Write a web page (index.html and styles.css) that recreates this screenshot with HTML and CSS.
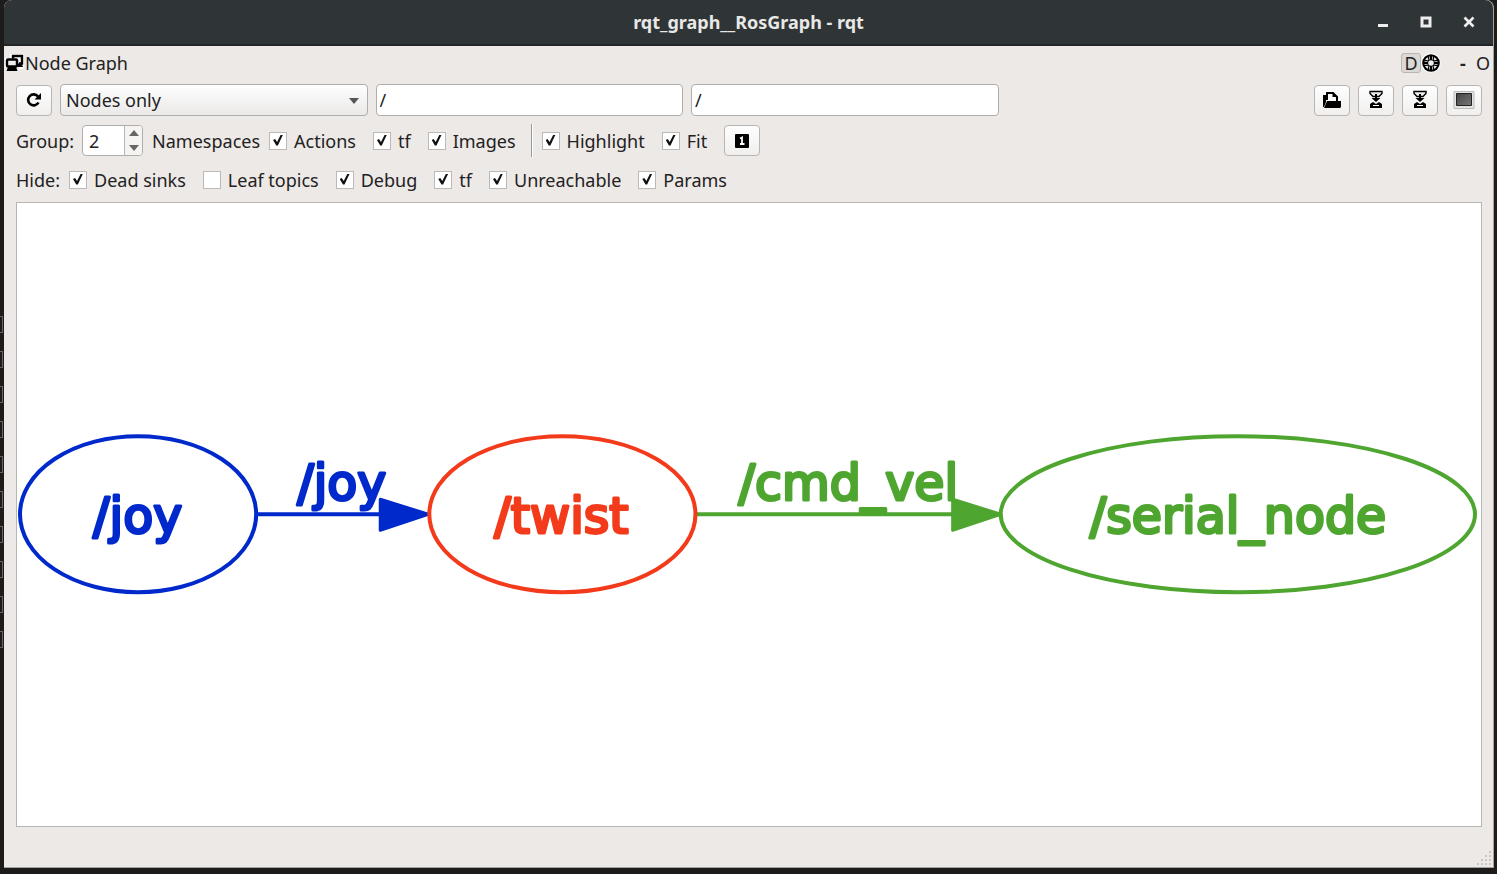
FILE: index.html
```html
<!DOCTYPE html>
<html lang="en">
<head>
<meta charset="utf-8">
<title>rqt_graph__RosGraph - rqt</title>
<link rel="stylesheet" href="styles.css">
</head>
<body>
<div class="desktop">
<div class="gutter" aria-hidden="true"><i></i><i></i><i></i><i></i><i></i><i></i><i></i><i></i><i></i><i></i></div>
<main class="window">
  <header class="titlebar">
    <h1 class="title">rqt_graph__RosGraph - rqt</h1>
    <div class="window-buttons">
      <button class="wm" aria-label="Minimize"><svg width="12" height="12" viewBox="0 0 12 12"><path d="M1 8h10v3H1z" fill="#eee"/></svg></button>
      <button class="wm" aria-label="Maximize"><svg width="12" height="12" viewBox="0 0 12 12"><path d="M2 2h8v8H2z" fill="none" stroke="#eee" stroke-width="3"/></svg></button>
      <button class="wm" aria-label="Close"><svg width="12" height="12" viewBox="0 0 12 12"><path d="M1.500 1.500l9 9M10.500 1.500l-9 9" stroke="#eee" stroke-width="2.600"/></svg></button>
    </div>
  </header>
  <div class="dock-title">
    <svg class="dock-icon" width="19" height="18" viewBox="0 0 19 18"><path d="M7.500 5V2.200h9v8H14M14 12.500h4" fill="none" stroke="#fff" stroke-width="5"/><path d="M2 6h9v6H2z" fill="#fff" stroke="#fff" stroke-width="4"/><path d="M8 4.500V2h9v7.500h-3" fill="none" stroke="#000" stroke-width="2.400"/><path d="M13 13h5l-1.500-3.500H13z"/><rect x="2" y="5.500" width="10" height="7" rx="1" fill="#eee" stroke="#000" stroke-width="2.400"/><path d="M3 13h8l1.500 4h-11z"/></svg>
    <span class="dock-name">Node Graph</span>
    <button class="dock-button raised">D</button>
    <button class="dock-button" aria-label="Help"><svg width="20" height="20" viewBox="0 0 20 20"><circle cx="10" cy="10" r="9.800" fill="#fff"/><circle cx="10" cy="10" r="8.800"/><circle cx="10" cy="10" r="5.600" fill="none" stroke="#eee" stroke-width="2"/><path d="M7 2h6v4H7zM7 14h6v4H7zM2 7h4v6H2zM14 7h4v6h-4z"/><path d="M8.500 3.500v3M11.500 3.500v3M8.500 13.500v3M11.500 13.500v3M3.500 8.500h3M3.500 11.500h3M13.500 8.500h3M13.500 11.500h3" stroke="#ddd" stroke-width=".8"/><circle cx="10" cy="10" r="2.800" fill="#eee"/></svg></button>
    <button class="dock-button minus">-</button>
    <button class="dock-button">O</button>
  </div>
  <div class="row tools">
    <button class="tool" aria-label="Refresh"><svg width="18" height="18" viewBox="0 0 18 18"><path d="M13.500 11.500A5.500 5.500 0 1 1 13 5.500" fill="none" stroke="#000" stroke-width="2.600"/><path d="M16 2v6.500H9.500z"/></svg></button>
    <div class="fields">
      <div class="combo"><select aria-label="Graph type"><option>Nodes only</option></select><svg class="arrow" width="10" height="6" viewBox="0 0 10 6"><path d="M0 0h10L5 6z" fill="#555"/></svg></div>
      <input class="line" type="text" value="/" aria-label="Namespace filter">
      <input class="line" type="text" value="/" aria-label="Topic filter">
    </div>
    <div class="tool-group">
      <button class="tool" aria-label="Load"><svg width="20" height="20" viewBox="0 0 20 20"><path d="M1 5h3v7L2 17H1z"/><path d="M5 10V3h6l4 4v4" fill="#fff" stroke="#000" stroke-width="2"/><path d="M10.500 2v5h5z"/><path d="M5 11h14v6l-1 1H2z"/></svg></button>
      <button class="tool" aria-label="Save DOT"><svg width="18" height="20" viewBox="0 0 18 20"><path d="M3 1.500h12v2l-3 3h-6l-3-3z" fill="#eee" stroke="#000" stroke-width="1.400"/><path d="M8 4h2v4h3.500L9 12 4.500 8H8z"/><path d="M3 18v-4l3-2 3 2 3-2 3 2v4z"/><path d="M6 15.500h6" stroke="#fff"/></svg></button>
      <button class="tool" aria-label="Save SVG"><svg width="18" height="20" viewBox="0 0 18 20"><path d="M3 1.500h12v2l-3 3h-6l-3-3z" fill="#eee" stroke="#000" stroke-width="1.400"/><path d="M8 4h2v4h3.500L9 12 4.500 8H8z"/><path d="M3 18v-4l3-2 3 2 3-2 3 2v4z"/><path d="M6 15.500h6" stroke="#fff"/></svg></button>
      <button class="tool" aria-label="Save image"><svg width="22" height="18" viewBox="0 0 22 18"><defs><linearGradient id="screen" x1="0" y1="0" x2="1" y2="1"><stop offset="0" stop-color="#444"/><stop offset="1" stop-color="#777"/></linearGradient></defs><path d="M1 .5h20v17H1z" fill="#e4e4e2" stroke="#bbb"/><path d="M3.500 2.500h15v12h-15z" fill="url(#screen)" stroke="#222"/></svg></button>
    </div>
  </div>
  <div class="row options">
    <label for="depth">Group:</label>
    <div class="spin"><input id="depth" type="number" value="2"><div class="steps"><button aria-label="Increase"><svg width="10" height="6" viewBox="0 0 10 6"><path d="M0 6h10L5 0z" fill="#666"/></svg></button><button aria-label="Decrease"><svg width="10" height="6" viewBox="0 0 10 6"><path d="M0 0h10L5 6z" fill="#666"/></svg></button></div></div>
    <span class="namespaces">Namespaces</span>
    <div class="checks">
      <label class="check"><input type="checkbox" checked>Actions</label>
      <label class="check"><input type="checkbox" checked>tf</label>
      <label class="check"><input type="checkbox" checked>Images</label>
    </div>
    <span class="separator"></span>
    <div class="checks">
      <label class="check"><input type="checkbox" checked>Highlight</label>
      <label class="check"><input type="checkbox" checked>Fit</label>
      <button class="tool" aria-label="Fit in view"><svg width="14" height="14" viewBox="0 0 14 14"><rect width="14" height="14" rx="1"/><path d="M5 4.500l2-1v6M5 10h4.500" fill="none" stroke="#fff" stroke-width="1.800"/></svg></button>
    </div>
  </div>
  <div class="row hide">
    <span>Hide:</span>
    <div class="checks">
      <label class="check"><input type="checkbox" checked>Dead sinks</label>
      <label class="check"><input type="checkbox">Leaf topics</label>
      <label class="check"><input type="checkbox" checked>Debug</label>
      <label class="check"><input type="checkbox" checked>tf</label>
      <label class="check"><input type="checkbox" checked>Unreachable</label>
      <label class="check"><input type="checkbox" checked>Params</label>
    </div>
  </div>
  <section class="canvas" aria-label="Graph">
    <svg class="graph" viewBox="17 203 1463 623">
      <g class="blue"><ellipse cx="138" cy="514" rx="118" ry="78"/><path d="M256 514h130"/><path class="head" d="M380 499l48 15-48 16z"/><text x="93" y="533">/joy</text><text x="297" y="500">/joy</text></g>
      <g class="green"><ellipse cx="1237" cy="514" rx="237" ry="78"/><path d="M696 514h260"/><path class="head" d="M952 499l48 15-48 16z"/><text x="738" y="500">/cmd_vel</text><text x="1089" y="533">/serial_node</text></g>
      <g class="red"><ellipse cx="562" cy="514" rx="133" ry="78"/><text x="494" y="533">/twist</text></g>
    </svg>
  </section>
  <footer class="status"><svg width="14" height="14" viewBox="0 0 14 14"><path d="M12 0h2v2h-2zM12 4h2v2h-2zM8 4h2v2H8zM12 8h2v2h-2zM8 8h2v2H8zM4 8h2v2H4zM12 12h2v2h-2zM8 12h2v2H8zM4 12h2v2H4zM0 12h2v2H0z" fill="#cbc8c4"/></svg></footer>
</main>
</div>
</body>
</html>
```
FILE: styles.css
```css
* { box-sizing: border-box; }
body {
  margin: 0;
  background: #1d1c1b;
  color: #222;
  font: 18px/24px "Noto Sans", sans-serif;
}
button, input, select { font: inherit; color: inherit; margin: 0; }
button { padding: 0; border: 0; background: none; }
svg { display: block; flex: none; }
.desktop { display: flex; min-height: 100vh; padding: 0 3px 6px 0; }
.gutter {
  flex: 0 0 4px;
  display: flex;
  flex-direction: column;
  gap: 18px;
  padding-top: 316px;
}
.gutter i { width: 3px; height: 17px; border: 1px solid #666; border-left: 0; }
.window {
  flex: 1;
  min-width: 0;
  display: flex;
  flex-direction: column;
  background: #ede9e6;
  border-right: 1px solid #a5a3a1;
  border-bottom: 1px solid #a5a3a1;
  border-radius: 8px 8px 0 0;
}
.titlebar {
  position: relative;
  display: flex;
  align-items: center;
  justify-content: center;
  height: 46px;
  background: #2f3437;
  border-bottom: 2px solid #222527;
  border-radius: 8px 8px 0 0;
}
.title { margin: 0; color: #e8e8e6; font-size: 18px; line-height: 24px; font-weight: 700; }
.window-buttons { position: absolute; right: 18px; top: 16px; display: flex; gap: 31px; }
.wm { width: 12px; height: 12px; }
.dock-title { display: flex; align-items: center; height: 34px; padding: 0 0 0 1px; }
.dock-name { flex: 1; padding-left: 1px; }
.dock-button { min-width: 20px; height: 20px; line-height: 20px; }
.raised { background: #dcd8d5; border: 1px solid #b9b5b1; border-radius: 3px; line-height: 18px; }
.minus { margin-left: 12px; font-weight: 700; }
.row { display: flex; align-items: center; margin: 0 11px 0 12px; }
.tools { height: 40px; gap: 8px; }
.fields { flex: 1; display: grid; grid-template-columns: repeat(4, 1fr); gap: 8px; margin-right: -8px; }
.tool-group { display: flex; gap: 8px; }
.tool {
  display: flex;
  align-items: center;
  justify-content: center;
  width: 36px;
  height: 31px;
  border: 1px solid #b8b5b2;
  border-radius: 4px;
  background: linear-gradient(#fefefe, #f0efee);
}
.combo { position: relative; }
.combo select {
  appearance: none;
  width: 100%;
  height: 32px;
  padding: 0 5px;
  border: 1px solid #b0adaa;
  border-radius: 4px;
  background: linear-gradient(#fefefe, #ebe9e8);
}
.arrow { position: absolute; right: 9px; top: 14px; }
.line { min-width: 0; height: 32px; padding: 0 3px; border: 1px solid #b0adaa; border-radius: 4px; background: #fff; }
.options { height: 41px; }
.spin {
  display: flex;
  width: 61px;
  height: 31px;
  margin: 0 9px 0 8px;
  border: 1px solid #b0adaa;
  border-radius: 4px;
  background: #fff;
  overflow: hidden;
}
.spin input { appearance: textfield; flex: 1; min-width: 0; border: 0; padding: 0 6px; background: none; }
.spin input::-webkit-inner-spin-button { appearance: none; margin: 0; }
.steps { display: flex; flex-direction: column; width: 18px; border-left: 1px solid #b8b5b2; background: #f5f4f3; }
.steps button { flex: 1; display: flex; align-items: center; justify-content: center; }
.namespaces { margin-right: 9px; }
.checks { display: flex; align-items: center; gap: 17px; }
.check { display: flex; align-items: center; gap: 7px; white-space: nowrap; }
.check input {
  appearance: none;
  width: 18px;
  height: 18px;
  border: 1px solid #bcb9b6;
  background: #fff;
}
.check input:checked::before {
  content: "";
  display: block;
  width: 10px;
  height: 11px;
  margin: 2px 3px;
  background: #111;
  clip-path: polygon(0 50%, 20% 42%, 40% 68%, 78% 0, 100% 0, 48% 100%, 32% 100%);
}
.separator { width: 2px; height: 33px; margin: 0 9px 0 15px; border-left: 1px solid #999; border-right: 1px solid #fff; }
.hide { height: 37px; gap: 9px; }
.canvas {
  flex: 1;
  min-height: 0;
  display: flex;
  margin: 4px 11px 0 12px;
  border: 1px solid #b8b6b2;
  background: #fff;
}
.graph { width: 100%; height: auto; flex: 1; min-width: 0; }
.graph text { font: 49px "DejaVu Sans", sans-serif; stroke-width: 3; stroke-linejoin: round; }
.graph ellipse { fill: none; stroke-width: 4; }
.graph path { stroke-width: 4; }
.graph .head { stroke-width: 3; stroke-linejoin: round; }
.blue { fill: #0029cc; stroke: #0029cc; }
.green { fill: #4ea52f; stroke: #4ea52f; }
.red { fill: #f33b1c; stroke: #f33b1c; }
.status { display: flex; align-items: flex-end; justify-content: flex-end; height: 40px; padding: 0 2px 2px; }
```
